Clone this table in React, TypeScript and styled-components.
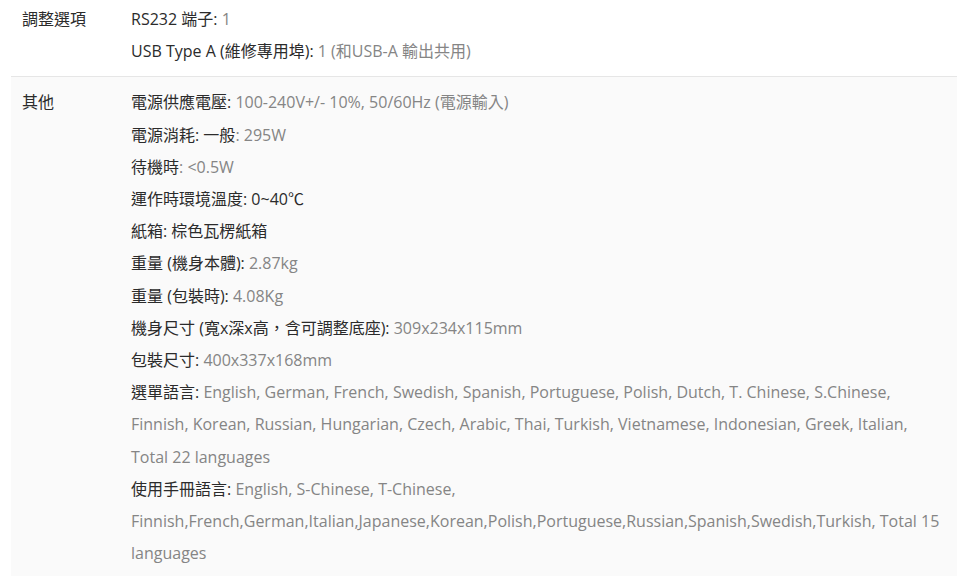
import * as React from "react";
import styled, { createGlobalStyle } from "styled-components";

const Global = createGlobalStyle`
  html, body {
    margin: 0;
    padding: 0;
    background: #ffffff;
  }
  body {
    font-family: "Open Sans", "Noto Sans CJK TC", sans-serif;
    -webkit-font-smoothing: antialiased;
  }
`;

const Table = styled.div`
  margin: 0 3px 0 11px;
  display: flex;
  flex-direction: column;
`;

const Row = styled.div<{ $shaded?: boolean; $top?: number }>`
  display: grid;
  grid-template-columns: 120px 1fr;
  padding: ${(p) => (p.$top ?? 9)}px 0 9px;
  background: ${(p) => (p.$shaded ? "#fafafa" : "#ffffff")};
  & + & {
    border-top: 1px solid #e6e6e6;
  }
`;

const Label = styled.div`
  padding-left: 11px;
  font-size: 16px;
  line-height: 32.2px;
  color: #2b2b2b;
`;

const Values = styled.div`
  display: flex;
  flex-direction: column;
`;

const Line = styled.div`
  font-size: 16px;
  line-height: 32.2px;
  color: #858585;
  padding-right: 13px;
`;

const Key = styled.span`
  color: #2b2b2b;
`;

type Spec = { key: string; value: string };

const adjust: Spec[] = [
  { key: "RS232 端子:", value: " 1" },
  { key: "USB Type A (維修專用埠):", value: " 1 (和USB-A 輸出共用)" },
];

const other: Spec[] = [
  { key: "電源供應電壓:", value: " 100-240V+/- 10%, 50/60Hz (電源輸入)" },
  { key: "電源消耗: 一般", value: ": 295W" },
  { key: "待機時", value: ": <0.5W" },
  { key: "運作時環境溫度: 0~40℃", value: "" },
  { key: "紙箱: 棕色瓦楞紙箱", value: "" },
  { key: "重量 (機身本體):", value: " 2.87kg" },
  { key: "重量 (包裝時):", value: " 4.08Kg" },
  { key: "機身尺寸 (寬x深x高，含可調整底座):", value: " 309x234x115mm" },
  { key: "包裝尺寸:", value: " 400x337x168mm" },
  {
    key: "選單語言:",
    value:
      " English, German, French, Swedish, Spanish, Portuguese, Polish, Dutch, T. Chinese, S.Chinese, Finnish, Korean, Russian, Hungarian, Czech, Arabic, Thai, Turkish, Vietnamese, Indonesian, Greek, Italian, Total 22 languages",
  },
  {
    key: "使用手冊語言:",
    value:
      " English, S-Chinese, T-Chinese, Finnish,French,German,Italian,Japanese,Korean,Polish,Portuguese,Russian,Spanish,Swedish,Turkish, Total 15 languages",
  },
];

const SpecLines = ({ items }: { items: Spec[] }) => (
  <Values>
    {items.map((s) => (
      <Line key={s.key}>
        <Key>{s.key}</Key>
        {s.value}
      </Line>
    ))}
  </Values>
);

export default function App() {
  return (
    <>
      <Global />
      <Table>
        <Row $top={3}>
          <Label>調整選項</Label>
          <SpecLines items={adjust} />
        </Row>
        <Row $shaded>
          <Label>其他</Label>
          <SpecLines items={other} />
        </Row>
      </Table>
    </>
  );
}
